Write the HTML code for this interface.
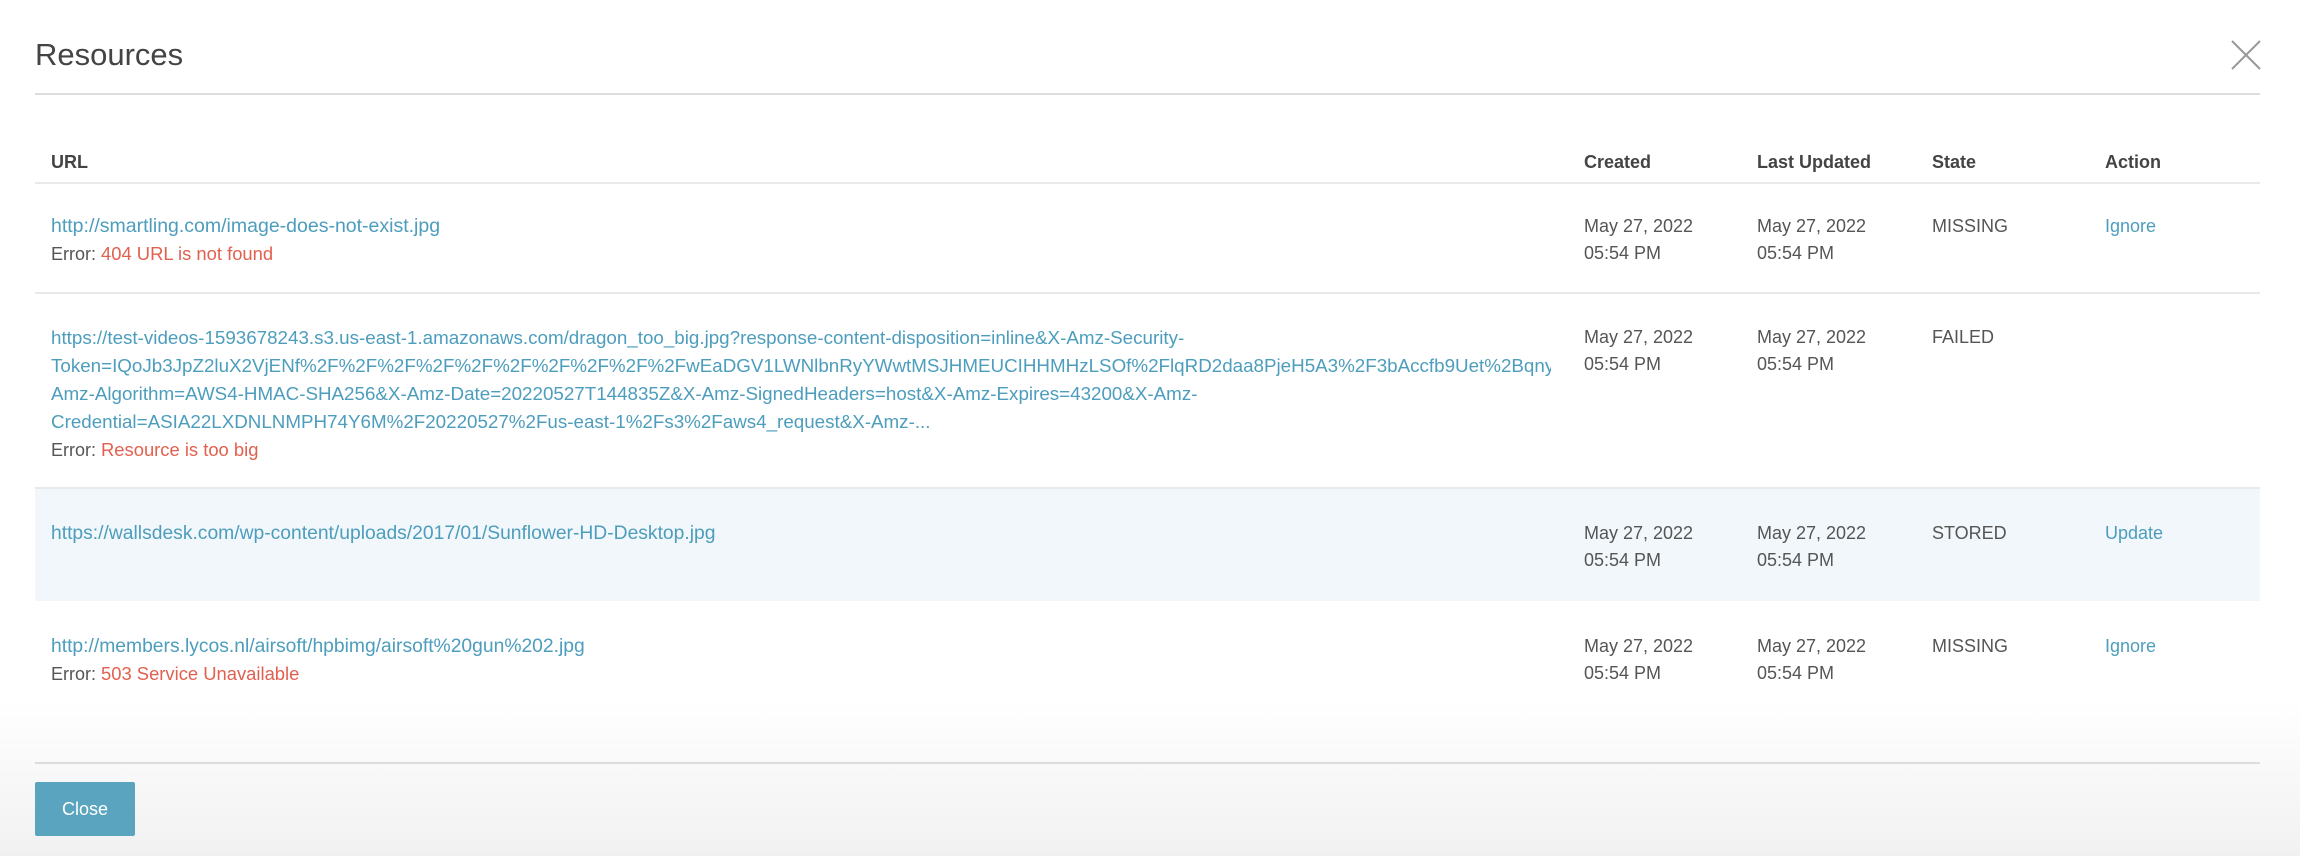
<!DOCTYPE html>
<html><head><meta charset="utf-8"><style>
*{margin:0;padding:0;box-sizing:border-box}
body{width:2300px;height:856px;overflow:hidden;background:#fff;font-family:"Liberation Sans",sans-serif;color:#555;position:relative}
.abs{position:absolute;white-space:nowrap}
.t{font-size:18px;line-height:27px}
.h{font-weight:bold;color:#444;font-size:18px}
.a{color:#4d9dbd}
.u{font-size:19.3px}
.e{color:#e2604f;font-size:18.4px}
.rule{position:absolute;left:35px;width:2225px;height:2px;background:#e9e9e9}
</style></head><body>
<div style="position:absolute;left:0;top:700px;width:2300px;height:156px;background:linear-gradient(#fff,#f1f1f1)"></div>
<div class="abs" style="left:35px;top:37px;font-size:31px;color:#444">Resources</div>
<svg class="abs" style="left:2231px;top:40px" width="30" height="30"><path d="M1 1L29 29M29 1L1 29" stroke="#999" stroke-width="2"/></svg>
<div class="rule" style="top:93px;background:#ddd"></div>
<div class="abs h" style="left:51px;top:152px">URL</div>
<div class="abs h" style="left:1584px;top:152px">Created</div>
<div class="abs h" style="left:1757px;top:152px">Last Updated</div>
<div class="abs h" style="left:1932px;top:152px">State</div>
<div class="abs h" style="left:2105px;top:152px">Action</div>
<div class="rule" style="top:182px"></div>

<div class="abs t" style="left:51px;top:213px"><span class="a" style="font-size:19.5px">http://smartling.com/image-does-not-exist.jpg</span><br>Error: <span class="e">404 URL is not found</span></div>
<div class="abs t" style="left:1584px;top:213px">May 27, 2022<br>05:54 PM</div>
<div class="abs t" style="left:1757px;top:213px">May 27, 2022<br>05:54 PM</div>
<div class="abs t" style="left:1932px;top:213px">MISSING</div>
<div class="abs t a" style="left:2105px;top:213px">Ignore</div>
<div class="rule" style="top:292px"></div>

<div class="abs t" style="left:51px;top:324px;width:1500px;overflow:hidden"><span class="a" style="font-size:18.8px">https://test-videos-1593678243.s3.us-east-1.amazonaws.com/dragon_too_big.jpg?response-content-disposition=inline&amp;X-Amz-Security-<br>Token=IQoJb3JpZ2luX2VjENf%2F%2F%2F%2F%2F%2F%2F%2F%2F%2FwEaDGV1LWNlbnRyYWwtMSJHMEUCIHHMHzLSOf%2FlqRD2daa8PjeH5A3%2F3bAccfb9Uet%2Bqny9AiEA<br>Amz-Algorithm=AWS4-HMAC-SHA256&amp;X-Amz-Date=20220527T144835Z&amp;X-Amz-SignedHeaders=host&amp;X-Amz-Expires=43200&amp;X-Amz-<br>Credential=ASIA22LXDNLNMPH74Y6M%2F20220527%2Fus-east-1%2Fs3%2Faws4_request&amp;X-Amz-...</span><br>Error: <span class="e">Resource is too big</span></div>
<div class="abs t" style="left:1584px;top:324px">May 27, 2022<br>05:54 PM</div>
<div class="abs t" style="left:1757px;top:324px">May 27, 2022<br>05:54 PM</div>
<div class="abs t" style="left:1932px;top:324px">FAILED</div>
<div class="rule" style="top:487px"></div>

<div style="position:absolute;left:35px;top:489px;width:2225px;height:112px;background:#f1f7fa"></div>
<div class="abs t a u" style="left:51px;top:520px">https://wallsdesk.com/wp-content/uploads/2017/01/Sunflower-HD-Desktop.jpg</div>
<div class="abs t" style="left:1584px;top:520px">May 27, 2022<br>05:54 PM</div>
<div class="abs t" style="left:1757px;top:520px">May 27, 2022<br>05:54 PM</div>
<div class="abs t" style="left:1932px;top:520px">STORED</div>
<div class="abs t a" style="left:2105px;top:520px">Update</div>

<div class="abs t" style="left:51px;top:633px"><span class="a u">http://members.lycos.nl/airsoft/hpbimg/airsoft%20gun%202.jpg</span><br>Error: <span class="e">503 Service Unavailable</span></div>
<div class="abs t" style="left:1584px;top:633px">May 27, 2022<br>05:54 PM</div>
<div class="abs t" style="left:1757px;top:633px">May 27, 2022<br>05:54 PM</div>
<div class="abs t" style="left:1932px;top:633px">MISSING</div>
<div class="abs t a" style="left:2105px;top:633px">Ignore</div>

<div class="rule" style="top:762px;background:#ddd"></div>
<div class="abs" style="left:35px;top:782px;width:100px;height:54px;background:#5ba4c0;border-radius:2px;color:#fff;font-size:18px;line-height:54px;text-align:center">Close</div>
</body></html>
